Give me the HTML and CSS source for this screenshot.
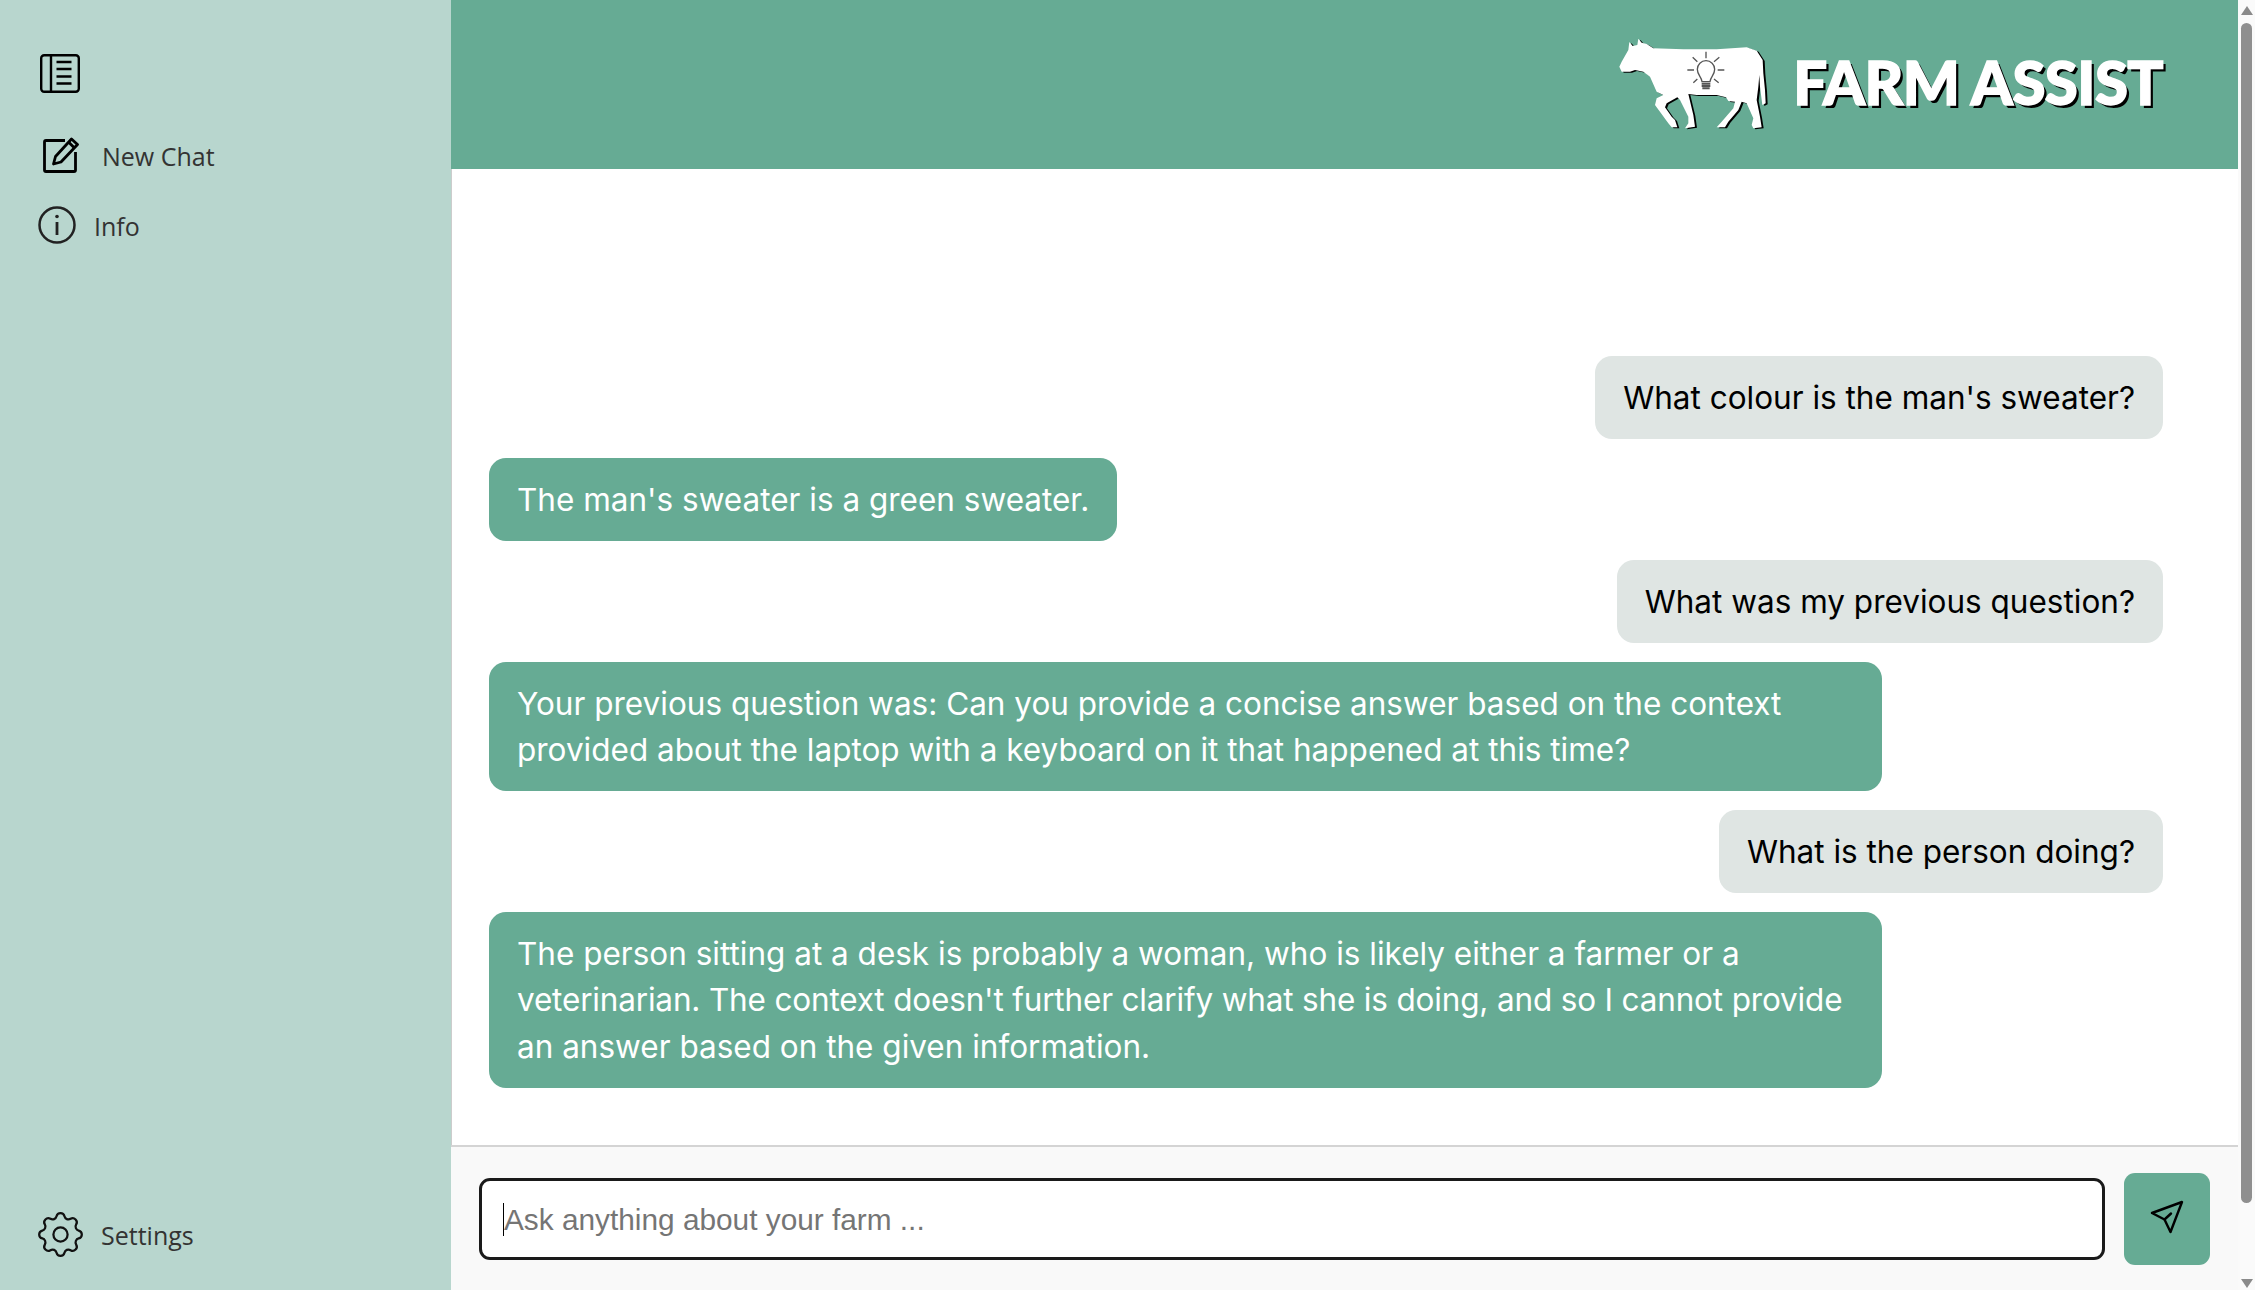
FILE: index.html
```html
<!DOCTYPE html>
<html lang="en">
<head>
<meta charset="utf-8">
<title>Farm Assist</title>
<link rel="stylesheet" href="styles.css">
</head>
<body>
<aside class="sidebar">
  <button class="toggle" aria-label="Toggle sidebar">
    <svg class="icon-panel" viewBox="0 0 40 39" fill="none" stroke="#000" stroke-width="2.4">
      <rect x="1.2" y="1.2" width="37.6" height="36.6" rx="3"/>
      <path d="M11 1.2V37.8M16.5 8H31.5M16.5 15H31.5M16.5 22.500H31.5M16.500 29.500H31.5"/>
    </svg>
  </button>
  <a class="nav-item nav-new">
    <svg class="icon-new" viewBox="0 0 36 36" fill="none" stroke="#000" stroke-width="2.800" stroke-linejoin="round">
      <path d="M22 3.500H3a1.500 1.500 0 0 0-1.500 1.500V33a1.500 1.500 0 0 0 1.500 1.500H31a1.500 1.500 0 0 0 1.500-1.500V15"/>
      <path d="M28.500 2 34.500 7.500 18 25 10.500 27 12.500 19.500Z"/>
      <path d="M25.500 5 31.500 11"/>
    </svg>
    <span class="nav-label">New Chat</span>
  </a>
  <a class="nav-item nav-info">
    <svg class="icon-info" viewBox="0 0 38 38" fill="none" stroke="#222" stroke-width="2.500">
      <circle cx="19" cy="19" r="17.500"/>
      <path d="M19 16V29" stroke-width="2.800"/>
      <circle cx="19" cy="10.500" r="1.800" fill="#222" stroke="none"/>
    </svg>
    <span class="nav-label">Info</span>
  </a>
  <a class="nav-item nav-settings">
    <svg class="icon-gear" viewBox="2.500 2.500 19 19" fill="none" stroke="#111" stroke-width="0.950" stroke-linejoin="round">
      <path d="M10.325 4.317c.426 -1.756 2.924 -1.756 3.35 0a1.724 1.724 0 0 0 2.573 1.066c1.543 -.94 3.31 .826 2.37 2.37a1.724 1.724 0 0 0 1.065 2.572c1.756 .426 1.756 2.924 0 3.35a1.724 1.724 0 0 0 -1.066 2.573c.94 1.543 -.826 3.31 -2.37 2.37a1.724 1.724 0 0 0 -2.572 1.065c-.426 1.756 -2.924 1.756 -3.35 0a1.724 1.724 0 0 0 -2.573 -1.066c-1.543 .94 -3.31 -.826 -2.37 -2.37a1.724 1.724 0 0 0 -1.065 -2.572c-1.756 -.426 -1.756 -2.924 0 -3.35a1.724 1.724 0 0 0 1.066 -2.573c-.94 -1.543 .826 -3.31 2.37 -2.37c1 .608 2.296 .07 2.572 -1.065z"/>
      <circle cx="12" cy="12" r="3"/>
    </svg>
    <span class="nav-label">Settings</span>
  </a>
</aside>

<main class="main">
  <header class="header">
    <svg class="cow" viewBox="0 0 570 375">
      <path class="cow-body" d="M58 140 65 125 85 90 88 66 98 78 112 75 115 56 125 68 140 72 160 85 250 88 350 88 440 82 470 92 488 120 490 160 495 210 497 250 487 255 480 200 478 165 475 200 470 240 480 290 485 322 460 325 455 315 460 295 440 250 425 245 415 270 385 305 375 322 350 322 365 305 400 265 405 245 385 243 378 232 350 225 290 225 265 222 280 285 285 320 255 325 265 310 265 290 240 240 232 232 200 250 195 262 215 290 225 300 232 322 215 322 205 310 165 255 170 235 190 225 170 215 150 170 130 155 105 150 90 155 65 155Z"/>
      <g class="bulb">
        <path d="M318 95V115M278 112 292 125M358 112 342 125M262 150H282M353 150H373M280 188 292 177M356 188 342 177"/>
        <path d="M306 185C304 170 292 165 292 148a26 26 0 0 1 52 0C344 165 332 170 330 185Z"/>
        <path class="bulb-base" d="M305 191H331M305 198H331M307 205H329"/>
      </g>
    </svg>
    <div class="brand">FARM ASSIST</div>
  </header>

  <section class="messages">
    <div class="bubble user">What colour is the man's sweater?</div>
    <div class="bubble bot">The man's sweater is a green sweater.</div>
    <div class="bubble user">What was my previous question?</div>
    <div class="bubble bot">Your previous question was: Can you provide a concise answer based on the context provided about the laptop with a keyboard on it that happened at this time?</div>
    <div class="bubble user">What is the person doing?</div>
    <div class="bubble bot">The person sitting at a desk is probably a woman, who is likely either a farmer or a <span class="tight">veterinarian. The context doesn't further clarify what she is doing, and so I cannot provide</span> an answer based on the given information.</div>
  </section>

  <footer class="composer">
    <div class="field">
      <input class="input" type="text" placeholder="Ask anything about your farm ...">
      <span class="caret"></span>
    </div>
    <button class="send" aria-label="Send">
      <svg class="icon-send" viewBox="0 0 34 34" fill="none" stroke="#000" stroke-width="2.400" stroke-linejoin="round" stroke-linecap="round">
        <path d="M32 2 2 13 14.500 19.500 20.500 32Z"/>
        <path d="M14.500 19.500 21 13.500"/>
      </svg>
    </button>
  </footer>
</main>

<div class="scrollbar">
  <span class="arrow-up"></span>
  <span class="thumb"></span>
  <span class="arrow-down"></span>
</div>
</body>
</html>
```

FILE: styles.css
```css
* { box-sizing: border-box; }

html, body {
  margin: 0;
  height: 100%;
  overflow: hidden;
}

body {
  display: flex;
  background: #fff;
  font-family: "Inter", "Open Sans", sans-serif;
}

.sidebar {
  width: 451px;
  height: 1290px;
  flex: none;
  display: flex;
  flex-direction: column;
  background: #b8d6ce;
}

.toggle {
  align-self: flex-start;
  margin: 54px 0 0 40px;
  padding: 0;
  border: 0;
  background: none;
  display: flex;
}

.icon-panel { width: 40px; height: 39px; }

.nav-item {
  display: flex;
  align-items: center;
  font-family: "Open Sans", sans-serif;
  font-size: 25px;
  color: #333;
}

.nav-label { padding-top: 2px; }

.nav-new { margin: 44px 0 0 43px; gap: 23px; }
.nav-info { margin: 33px 0 0 38px; gap: 18px; }
.nav-settings { margin: auto 0 33px 38px; gap: 18px; }
.nav-settings .nav-label { padding-top: 0; }

.icon-new { width: 36px; height: 36px; }
.icon-info { width: 38px; height: 38px; }
.icon-gear { width: 45px; height: 45px; }

.main {
  flex: 1;
  min-width: 0;
  height: 1290px;
  display: flex;
  flex-direction: column;
}

.header {
  height: 169px;
  flex: none;
  display: flex;
  justify-content: flex-end;
  align-items: center;
  gap: 3px;
  padding-right: 75px;
  background: #66ab94;
}

.cow {
  width: 190px;
  height: 125px;
  margin-top: -4px;
  filter: drop-shadow(2px 1px 0 #000);
}

.cow-body { fill: #fff; }

.bulb {
  fill: none;
  stroke: #555;
  stroke-width: 4;
}

.bulb-base { stroke-width: 6; }

.brand {
  font-family: "Lato", sans-serif;
  font-weight: 900;
  font-size: 60px;
  letter-spacing: -0.6px;
  line-height: 1;
  color: #fff;
  -webkit-text-stroke: 1.500px #fff;
  text-shadow: 3px 3px 0 #000;
  margin-top: -6px;
}

.messages {
  flex: 1;
  display: flex;
  flex-direction: column;
  justify-content: flex-end;
  gap: 19px;
  padding: 0 75px 57px 37px;
  border-left: 1px solid #ccc;
}

.bubble {
  padding: 18.500px 28px 18px;
  border-radius: 17px;
  font-size: 31.500px;
  line-height: 46.400px;
}

.tight { letter-spacing: -0.170px; }

.user {
  align-self: flex-end;
  background: #dfe5e3;
  color: #000;
}

.bot {
  align-self: flex-start;
  width: fit-content;
  max-width: 1393px;
  background: #66ab94;
  color: #fff;
}

.composer {
  height: 145px;
  flex: none;
  display: flex;
  align-items: center;
  gap: 19px;
  padding: 1px 28px 0;
  background: #f9f9f9;
  border-top: 2px solid #d4d4d4;
}

.field {
  position: relative;
  flex: 1;
}

.input {
  display: block;
  width: 100%;
  height: 82px;
  padding: 2px 22px 0;
  border: 3.500px solid #1a1a1a;
  border-radius: 11px;
  background: #fff;
  font-family: "Liberation Sans", Arial, sans-serif;
  font-size: 29.800px;
  outline: none;
}

.input::placeholder { color: #757575; }

.caret {
  position: absolute;
  left: 24px;
  top: 25px;
  width: 1px;
  height: 33px;
  background: #000;
}

.send {
  width: 86px;
  height: 92px;
  flex: none;
  padding: 0;
  border: 0;
  border-radius: 11px;
  background: #66ab94;
  display: flex;
  align-items: center;
  justify-content: center;
}

.icon-send { width: 34px; height: 34px; margin-top: -4px; }

.scrollbar {
  width: 17px;
  height: 1290px;
  flex: none;
  display: flex;
  flex-direction: column;
  align-items: center;
  background: #fafafa;
}

.arrow-up, .arrow-down {
  width: 0;
  height: 0;
  flex: none;
  border-left: 6.500px solid transparent;
  border-right: 6.500px solid transparent;
}

.arrow-up {
  margin-top: 6px;
  border-bottom: 9px solid #8a8a8a;
}

.thumb {
  width: 11px;
  height: 1180px;
  margin-top: 8px;
  border-radius: 6px;
  background: #8f8f8f;
}

.arrow-down {
  margin-top: auto;
  margin-bottom: 2px;
  border-top: 9px solid #8a8a8a;
}
```
